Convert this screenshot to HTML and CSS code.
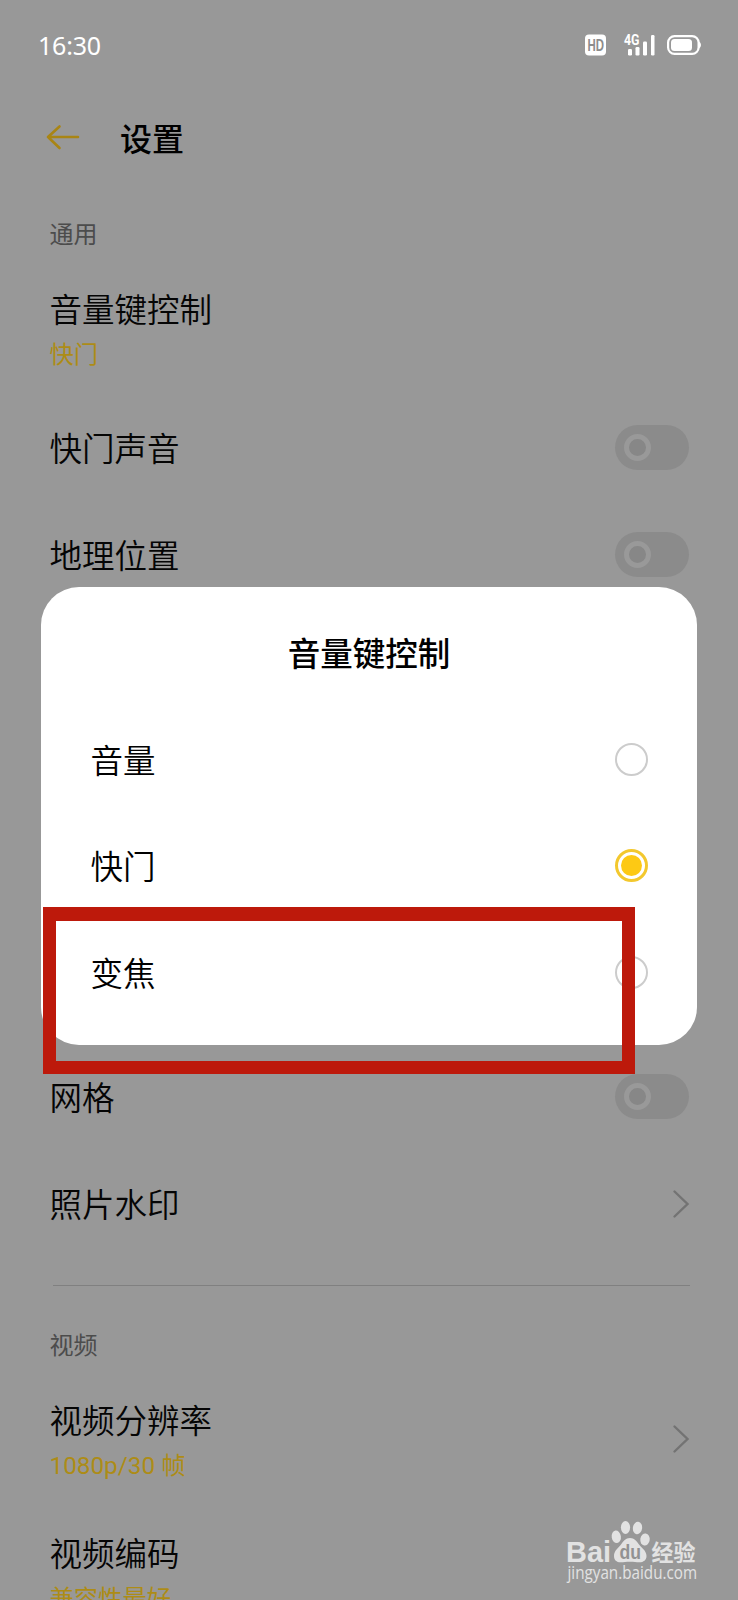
FILE: index.html
```html
<!DOCTYPE html>
<html lang="zh-CN">
<head>
<meta charset="utf-8">
<title>设置</title>
<link rel="stylesheet" href="styles.css">
</head>
<body>
<div class="screen">
  <header class="status">
    <span class="time">16:30</span>
    <svg class="status-icons" width="120" height="24" viewBox="0 0 120 24">
      <rect x="0" y="1.5" width="21" height="21" rx="4" fill="#fff"/>
      <text x="2.500" y="17.700" class="hd" textLength="16.500" lengthAdjust="spacingAndGlyphs">HD</text>
      <text x="39" y="12.200" class="net" textLength="15.500" lengthAdjust="spacingAndGlyphs">4G</text>
      <g fill="#fff">
        <rect x="43" y="16" width="4" height="6.500" rx="1.200"/>
        <rect x="50.500" y="14" width="4" height="8.500" rx="1.200"/>
        <rect x="58" y="8.500" width="4" height="14" rx="1.200"/>
        <rect x="66" y="2" width="3.500" height="20.500" rx="1.200"/>
        <rect x="86" y="6" width="21" height="12" rx="3.500"/>
        <path d="M114 8.500q2 1 2 3.500t-2 3.500z"/>
      </g>
      <rect x="83.100" y="3.100" width="30.500" height="17.800" rx="6.500" fill="none" stroke="#fff" stroke-width="2.200"/>
    </svg>
  </header>

  <div class="header">
    <svg class="back" width="36" height="28" viewBox="0 0 36 28"><path d="M33 14H3M14.500 3.500L3 14l11.500 11" fill="none" stroke="#a98514" stroke-width="2.600" stroke-linecap="round" stroke-linejoin="round"/></svg>
    <h1 class="title">设置</h1>
  </div>

  <main class="list">
    <div class="section">通用</div>
    <div class="row double"><div><div class="label">音量键控制</div><div class="value">快门</div></div></div>
    <div class="row"><div class="label">快门声音</div><span class="toggle"></span></div>
    <div class="row"><div class="label">地理位置</div><span class="toggle"></span></div>
    <div class="row after-dialog"><div class="label">网格</div><span class="toggle"></span></div>
    <div class="row"><div class="label">照片水印</div><svg class="chev" width="18" height="30" viewBox="0 0 18 30"><path d="M2.500 2.500L15.500 15 2.500 27.500"/></svg></div>
    <div class="divider"></div>
    <div class="section video">视频</div>
    <div class="row double resolution"><div><div class="label">视频分辨率</div><div class="value">1080p/30 帧</div></div><svg class="chev" width="18" height="30" viewBox="0 0 18 30"><path d="M2.500 2.500L15.500 15 2.500 27.500"/></svg></div>
    <div class="row double codec"><div><div class="label">视频编码</div><div class="value">兼容性最好</div></div></div>
  </main>

  <section class="dialog">
    <h2 class="dialog-title">音量键控制</h2>
    <div class="option"><span>音量</span><i class="radio"></i></div>
    <div class="option"><span>快门</span><i class="radio on"></i></div>
    <div class="option"><span>变焦</span><i class="radio"></i></div>
  </section>
  <div class="marker"></div>

  <svg class="watermark" width="138" height="74" viewBox="0 0 138 74">
    <g fill="#e2e2e2">
      <text x="0" y="43" class="wm-bai" textLength="45" lengthAdjust="spacingAndGlyphs">Bai</text>
      <ellipse cx="50.300" cy="17.800" rx="4.600" ry="6.300" transform="rotate(-8 50.300 17.800)"/>
      <ellipse cx="59.500" cy="8.500" rx="4.600" ry="6.500"/>
      <ellipse cx="71.500" cy="9" rx="4.600" ry="6.300" transform="rotate(8 71.500 9)"/>
      <ellipse cx="79" cy="20.500" rx="4.700" ry="6" transform="rotate(8 79 20.500)"/>
      <path d="M64 19c4.500 0 6.500 3 9 6.500s7.500 6 7.500 11.500c0 4-3 6.300-7 6.300-3.500 0-5.500-.6-9.500-.6s-6 .6-9.500.6c-4 0-6.500-2.300-6.500-6.300 0-5.500 4.500-8 7-11.500s4.500-6.500 9-6.500z"/>
      <text x="85.500" y="41.500" class="wm-cn" textLength="44" lengthAdjust="spacingAndGlyphs">经验</text>
      <text x="1.500" y="60" class="wm-url" textLength="129.500" lengthAdjust="spacingAndGlyphs">jingyan.baidu.com</text>
    </g>
    <text x="53.500" y="39.500" class="wm-du" textLength="21.500" lengthAdjust="spacingAndGlyphs">du</text>
  </svg>
</div>
</body>
</html>
```
FILE: styles.css
```css
*, *::before { box-sizing: border-box; }
body { margin: 0; background: #989898; }
.screen {
  position: relative;
  width: 738px;
  height: 1600px;
  overflow: hidden;
  background: #989898;
  color: #050505;
  font-family: Roboto, "Noto Sans CJK SC", sans-serif;
}
.status {
  display: flex;
  align-items: center;
  justify-content: space-between;
  height: 90px;
  padding: 0 33px 0 38px;
  color: #fff;
}
.time { font: 400 25px/32px "Noto Sans", sans-serif; letter-spacing: -0.2px; }
.hd { font: 700 16px "Liberation Sans", sans-serif; fill: #8c8c8c; }
.net { font: 700 14px Roboto, sans-serif; fill: #fff; }
.header {
  display: flex;
  align-items: center;
  height: 94px;
  padding-left: 45px;
}
.title {
  margin: 0 0 0 39px;
  padding-bottom: 1px;
  font: 500 32px/48px "Noto Sans CJK SC", sans-serif;
  color: #000;
}
.list { padding: 0 49px 0 49.500px; }
.section {
  height: 86px;
  padding-top: 32px;
  font: 400 24px/34px "Noto Sans CJK SC", sans-serif;
  color: #4c4c4c;
}
.row {
  display: flex;
  align-items: center;
  justify-content: space-between;
  height: 107px;
}
.row.double { height: 124px; align-items: flex-start; padding-top: 14px; }
.label { padding-bottom: 1px; font: 350 32.500px/48px "Noto Sans CJK SC", sans-serif; }
.value {
  margin-top: 4px;
  font: 400 24.300px/36px Roboto, "Noto Sans CJK SC", sans-serif;
  color: #ad8c16;
}
.row.after-dialog { margin-top: 435px; }
.toggle {
  display: flex;
  align-items: center;
  width: 74px;
  height: 45px;
  padding-left: 9px;
  border-radius: 23px;
  background: #8b8b8b;
}
.toggle::before {
  content: "";
  width: 27px;
  height: 27px;
  border: 5px solid #999;
  border-radius: 50%;
  background: #878787;
}
.chev { margin-right: -1px; fill: none; stroke: #737373; stroke-width: 2.400; stroke-linecap: round; }
.divider { height: 1px; margin: 28px -1px 0 3px; background: #808080; }
.section.video { height: 109px; padding-top: 41px; }
.row.double.resolution { height: 133px; padding-top: 0; }
.resolution .value { margin-top: 4px; }
.resolution .chev { margin-top: 29px; }
.row.double.codec { height: auto; padding-top: 0; }
.codec .value { margin-top: 4px; }
.dialog {
  position: absolute;
  left: 41px;
  top: 587px;
  width: 656px;
  height: 458px;
  border-radius: 38px;
  background: #fff;
  color: #000;
}
.dialog-title {
  margin: 0;
  padding: 41px 0 30px;
  text-align: center;
  font: 500 32.500px/48px "Noto Sans CJK SC", sans-serif;
}
.option {
  display: flex;
  align-items: center;
  justify-content: space-between;
  height: 106.600px;
  padding: 0 49px 0 49.500px;
  font: 350 32.500px/48px "Noto Sans CJK SC", sans-serif;
}
.option span { padding-bottom: 1px; }
.radio {
  display: flex;
  align-items: center;
  justify-content: center;
  width: 33px;
  height: 33px;
  border: 2.500px solid #ccc;
  border-radius: 50%;
}
.radio.on { border: 3px solid #f3c82e; }
.radio.on::before { content: ""; width: 21px; height: 21px; border-radius: 50%; background: #fdc914; }
.marker {
  position: absolute;
  left: 43px;
  top: 907px;
  width: 592px;
  height: 167px;
  border: 13px solid #bd190b;
  border-width: 14px 13px 13px;
}
.watermark { position: absolute; left: 566px; top: 1519px; }
.wm-bai { font: 700 30px "Liberation Sans", sans-serif; }
.wm-du { font: 700 20px "Liberation Sans", sans-serif; fill: #929292; }
.wm-cn { font: 700 23px "Noto Sans CJK SC", sans-serif; }
.wm-url { font: 400 17.500px "Open Sans", sans-serif; }
```
